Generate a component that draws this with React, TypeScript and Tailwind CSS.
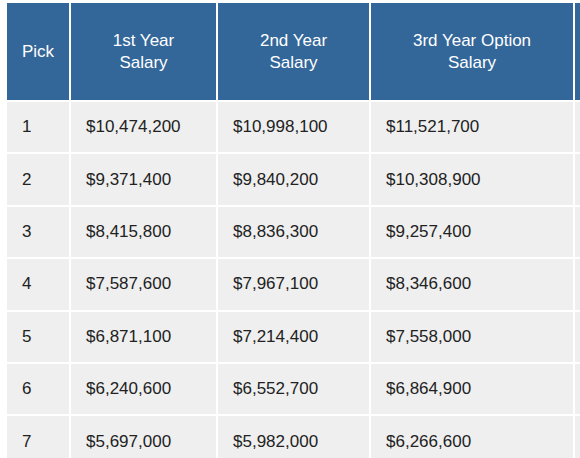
const headers = ["Pick", "1st Year Salary", "2nd Year Salary", "3rd Year Option Salary", "4th Year Option Salary"];

const rows = [
  ["1", "$10,474,200", "$10,998,100", "$11,521,700", "$14,555,600"],
  ["2", "$9,371,400", "$9,840,200", "$10,308,900", "$13,040,700"],
  ["3", "$8,415,800", "$8,836,300", "$9,257,400", "$11,728,800"],
  ["4", "$7,587,600", "$7,967,100", "$8,346,600", "$10,591,800"],
  ["5", "$6,871,100", "$7,214,400", "$7,558,000", "$9,611,900"],
  ["6", "$6,240,600", "$6,552,700", "$6,864,900", "$8,745,900"],
  ["7", "$5,697,000", "$5,982,000", "$6,266,600", "$8,002,400"],
  ["8", "$5,224,800", "$5,486,200", "$5,747,300", "$7,345,100"],
];

const colWidths = ["w-[62px]", "w-[145px]", "w-[151px]", "w-[202px]", "w-[180px]"];

export default function App() {
  return (
    <div className="w-[580px] h-[458px] overflow-hidden bg-white pl-[5px] pt-[1px] font-['Liberation_Sans',Arial,sans-serif]">
      <table className="table-fixed w-[752px] border-separate border-spacing-[2px] text-[17px]">
        <colgroup>
          {colWidths.map((w, i) => (
            <col key={i} className={w} />
          ))}
        </colgroup>
        <thead>
          <tr>
            {headers.map((h, i) => (
              <th
                key={i}
                className="h-[97px] overflow-hidden whitespace-nowrap bg-[#336699] px-[15px] text-center align-middle text-[17px] font-normal leading-[22px] text-white"
              >
                {h === "Pick" ? h : (
                  <>
                    {h.replace(/ Salary$/, "")}
                    <br />
                    Salary
                  </>
                )}
              </th>
            ))}
          </tr>
        </thead>
        <tbody>
          {rows.map((r, ri) => (
            <tr key={ri}>
              {r.map((c, ci) => (
                <td
                  key={ci}
                  className="h-[50.4px] overflow-hidden whitespace-nowrap bg-[#efefef] px-[15px] text-left align-middle text-[17px] leading-[20px] text-[#222]"
                >
                  {c}
                </td>
              ))}
            </tr>
          ))}
        </tbody>
      </table>
    </div>
  );
}
